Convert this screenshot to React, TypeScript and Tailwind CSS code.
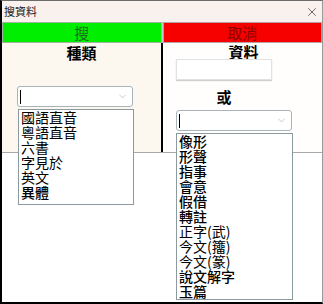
import { ChevronDown, X } from 'lucide-react'

const CJK = "font-['Noto_Sans_CJK_TC','Noto_Sans_CJK_SC',sans-serif]"

const KINDS = ['國語直音', '粵語直音', '六書', '字見於', '英文', '異體']
const SIX = [
  { t: '像形', b: true },
  { t: '形聲', b: true },
  { t: '指事', b: true },
  { t: '會意', b: true },
  { t: '假借', b: true },
  { t: '轉註', b: true },
  { t: '正字(武)', b: false },
  { t: '今文(籒)', b: false },
  { t: '今文(篆)', b: false },
  { t: '說文解字', b: true },
  { t: '玉篇', b: true },
]

function Combo({ width }: { width: string }) {
  return (
    <div className={`${width} flex h-[21px] items-center justify-between rounded-[3px] border border-[#a9b3bb] bg-white pl-[2px] pr-[4px]`}>
      <span className="h-[14px] w-px bg-black" />
      <ChevronDown size={11} strokeWidth={1} className="text-[#8a8a8a]" />
    </div>
  )
}

function List({ items, width, extra }: { items: { t: string; b: boolean }[]; width: string; extra?: string }) {
  return (
    <div className={`${width} ${extra ?? ''} relative z-10 border border-[#8a9a9e] bg-white pl-[2px]`}>
      {items.map((it) => (
        <div key={it.t} className={`h-[15px] whitespace-nowrap text-[14px] leading-[15px] text-black ${it.b ? 'font-medium' : 'font-normal'}`}>
          {it.t}
        </div>
      ))}
    </div>
  )
}

export default function App() {
  return (
    <div className={`${CJK} relative h-[304px] w-[323px] overflow-hidden border-t border-l-2 border-b-2 border-r border-t-[#6b6b6b] border-l-black border-b-black border-r-[#9a9a9a] bg-white`}>
      {/* title bar */}
      <div className="flex h-[21px] items-center justify-between bg-[#f8f1ee] pl-[2px] pr-[3px]">
        <span className="text-[11px] leading-none text-[#202020]">搜資料</span>
        <X size={14} strokeWidth={1.2} className="text-[#333]" />
      </div>

      {/* buttons */}
      <div className="flex h-[21px] gap-px bg-[#c9c9c9]">
        <button type="button" className="flex-1 border border-[#9fb59f] bg-[#00ee00] text-[15px] leading-none text-[#1d6a1d]">
          搜
        </button>
        <button type="button" className="flex-1 border border-[#b59f9f] bg-[#f60000] text-[15px] leading-none text-[#8a0000]">
          取消
        </button>
      </div>

      {/* search panel */}
      <div className="flex h-[110px] border-b border-[#a8a8a8]">
        <div className="flex w-[159px] shrink-0 flex-col bg-[#fdf8ef] pl-[15px]">
          <div className="-ml-[15px] mt-[1px] text-center text-[15px] font-bold leading-[18px] text-black">種類</div>
          <div className="mt-[24px]">
            <Combo width="w-[116px]" />
          </div>
          <div className="mt-[2px] pl-px">
            <List items={KINDS.map((t) => ({ t, b: t === '異體' }))} width="w-[116px]" extra="pb-[4px]" />
          </div>
        </div>
        <div className="flex flex-1 flex-col border-l-2 border-black bg-[#fffefc] pl-[13px]">
          <div className="-ml-[13px] mt-[1px] pl-[2px] text-center text-[15px] font-bold leading-[15px] text-black">資料</div>
          <div className="h-[21px] w-[96px] shrink-0 border border-[#e2e2e2] bg-white shadow-[0_1px_1px_#d0d0d0]" />
          <div className="mt-[8px] w-[96px] text-center text-[15px] font-bold leading-[18px] text-black">或</div>
          <div className="mt-[4px]">
            <Combo width="w-[116px]" />
          </div>
          <div className="mt-[2px]">
            <List items={SIX} width="w-[117px]" />
          </div>
        </div>
      </div>
    </div>
  )
}
